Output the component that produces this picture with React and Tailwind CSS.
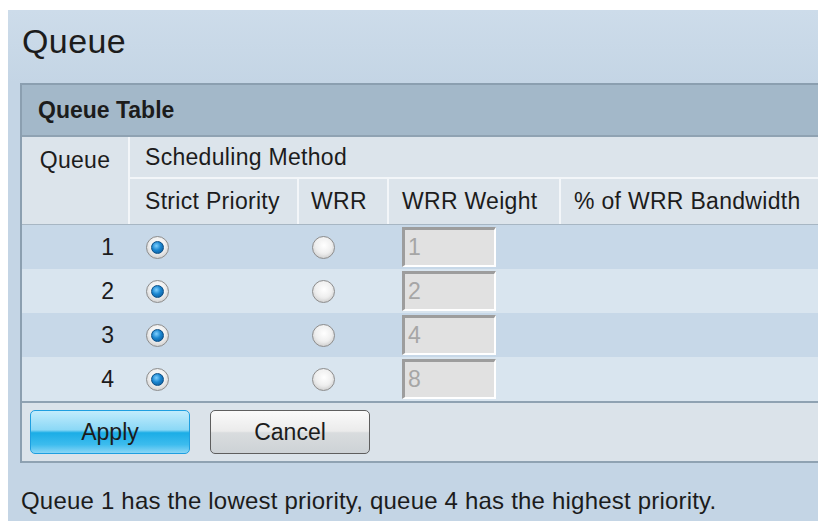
const rows = [
  { queue: 1, weight: "1" },
  { queue: 2, weight: "2" },
  { queue: 3, weight: "4" },
  { queue: 4, weight: "8" },
];

function Radio({ checked }) {
  return (
    <span className="flex h-[23px] w-[23px] items-center justify-center rounded-full border border-[#8d8d8d] bg-[radial-gradient(circle_at_50%_40%,#ffffff_0%,#f2f2f2_45%,#bdbdbd_100%)]">
      {checked ? (
        <span className="h-[13px] w-[13px] rounded-full border border-[#0b4f86] bg-[radial-gradient(circle_at_40%_35%,#7fd0ff_0%,#1a86d0_45%,#0a4f8c_100%)]"></span>
      ) : (
        <span className="h-[16px] w-[16px] rounded-full bg-[radial-gradient(circle_at_50%_40%,#ffffff_0%,#f0f0f0_60%,#dcdcdc_100%)]"></span>
      )}
    </span>
  );
}

export default function App() {
  return (
    <div className="h-[521px] w-[818px] overflow-hidden bg-white pl-[8px] pt-[10px] font-['Liberation_Sans',Arial,sans-serif] text-[#1c1c1c]">
      <div className="h-full bg-[#c4d5e5]">
        <div className="h-[73px] bg-gradient-to-b from-[#cddcea] to-[#c4d5e5] pl-[14px] pt-[14px] text-[34px] leading-[34px] tracking-[0.4px]">
          Queue
        </div>

        <div className="ml-[12px] w-[830px] border-l-2 border-t-2 border-[#8b9fb0]">
          <div className="flex h-[50px] items-center bg-[#a3b8c9] pl-[16px] text-[23px] font-bold">
            Queue Table
          </div>

          <div className="grid grid-cols-[108px_169px_90px_172px_1fr] grid-rows-[42px_45px] border-t-2 border-[#8fa2b2] bg-[#dce4eb] text-[23px] tracking-[0.3px]">
            <div className="row-span-2 border-r-2 border-[#f3f6f9] pt-[6px] text-center">Queue</div>
            <div className="col-span-4 flex items-center border-b-2 border-[#f3f6f9] pl-[15px]">
              Scheduling Method
            </div>
            <div className="flex items-center border-r-2 border-[#f3f6f9] pl-[15px]">Strict Priority</div>
            <div className="flex items-center border-r-2 border-[#f3f6f9] pl-[12px]">WRR</div>
            <div className="flex items-center border-r-2 border-[#f3f6f9] pl-[13px]">WRR Weight</div>
            <div className="flex items-center pl-[13px]">% of WRR Bandwidth</div>
          </div>

          <div className="border-t border-[#a7b6c3]">
            {rows.map((r, i) => (
              <div
                key={r.queue}
                className={`grid h-[44px] grid-cols-[108px_169px_90px_172px_1fr] items-center text-[23px] ${
                  i % 2 === 0 ? "bg-[#c7d8e8]" : "bg-[#d9e5ef]"
                }`}
              >
                <div className="pr-[16px] text-right">{r.queue}</div>
                <div className="pl-[16px]">
                  <Radio checked />
                </div>
                <div className="pl-[13px]">
                  <Radio />
                </div>
                <div className="pl-[13px]">
                  <div className="flex h-[40px] w-[94px] items-center border-l-[3px] border-t-[3px] border-b-2 border-r-2 border-l-[#9d9d9d] border-t-[#9d9d9d] border-b-white border-r-white bg-[#e1e1e1] pl-[3px] text-[#a6a6a6]">
                    {r.weight}
                  </div>
                </div>
                <div></div>
              </div>
            ))}
          </div>

          <div className="flex h-[62px] items-center gap-[20px] border-b-2 border-t-2 border-[#8fa2b2] bg-[#dbe3ea] pl-[8px]">
            <button className="h-[44px] w-[160px] rounded-[5px] border border-[#1f9fe0] bg-[linear-gradient(to_bottom,#c2ecfc_0%,#8bd8f6_45%,#1bade6_52%,#3dbcee_80%,#8ad6f6_100%)] text-[23px] text-[#1c1c1c]">
              Apply
            </button>
            <button className="h-[44px] w-[160px] rounded-[5px] border border-[#5e5e5e] bg-[linear-gradient(to_bottom,#fafafa_0%,#ebebeb_48%,#d9dcde_52%,#cdd2d6_100%)] text-[23px] text-[#1c1c1c]">
              Cancel
            </button>
          </div>
        </div>

        <div className="pl-[13px] pt-[20px] text-[24px] tracking-[0.2px]">
          Queue 1 has the lowest priority, queue 4 has the highest priority.
        </div>
      </div>
    </div>
  );
}
